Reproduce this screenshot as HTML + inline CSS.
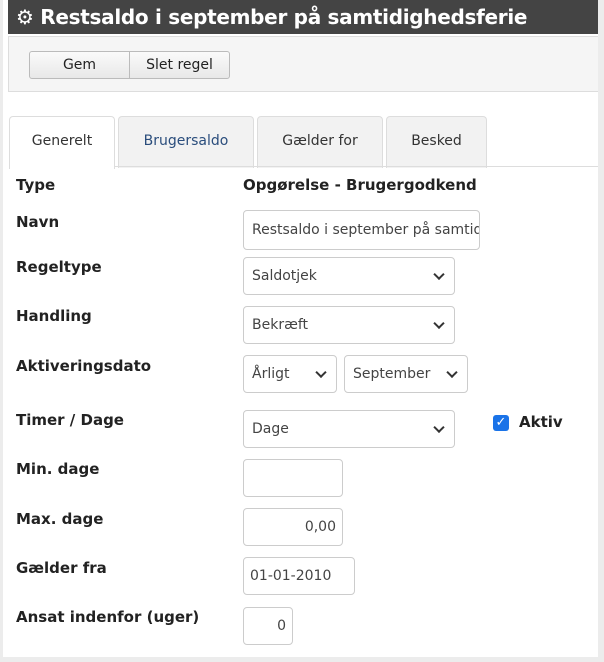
<!DOCTYPE html>
<html><head><meta charset="utf-8"><style>
*{box-sizing:border-box;margin:0;padding:0}
body{width:604px;height:662px;background:#ececec;font-family:"DejaVu Sans","Liberation Sans",sans-serif;position:relative;overflow:hidden}
.a{position:absolute}
.main{left:3px;top:0;width:595px;height:657px;background:#fff}
.title{left:8px;top:0;width:590px;height:34px;background:#444;color:#fff;font:bold 20px "DejaVu Sans",sans-serif;line-height:34px;padding-left:8px;letter-spacing:-0.3px}
.tb{left:8px;top:36px;width:590px;height:56px;background:#f5f5f5;border:1px solid #ddd;border-right:none}
.btn{top:51px;height:28px;border:1px solid #bbb;font-size:14px;line-height:26px;text-align:center;color:#222;background:linear-gradient(#fafafa,#e8e8e8)}
.tab{top:116px;height:52px;border:1px solid #ddd;border-bottom:none;border-radius:4px 4px 0 0;font-size:14px;text-align:center;line-height:48px;color:#333;background:#f2f2f2}
.lbl{left:16px;font-weight:bold;font-size:15px;color:#222}
.in{border:1px solid #ccc;border-radius:4px;background:#fff;font-size:14px;color:#444;padding-left:8px;display:flex;align-items:center}
.sel::after{content:"";position:absolute;right:11px;top:50%;width:6px;height:6px;border-right:2px solid #333;border-bottom:2px solid #333;transform:translateY(-70%) rotate(45deg)}
.r{justify-content:flex-end;padding-right:6px}
</style></head><body>
<div class="a main"></div>
<div class="a title">⚙ Restsaldo i september på samtidighedsferie</div>
<div class="a tb"></div>
<div class="a btn" style="left:29px;width:101px;border-radius:3px 0 0 3px">Gem</div>
<div class="a btn" style="left:129px;width:101px;border-radius:0 3px 3px 0">Slet regel</div>
<div class="a tab" style="left:9px;width:106px;background:#fff;height:53px;color:#333">Generelt</div>
<div class="a tab" style="left:118px;width:136px;color:#2a4d7c">Brugersaldo</div>
<div class="a tab" style="left:257px;width:126px">Gælder for</div>
<div class="a tab" style="left:386px;width:101px">Besked</div>
<div class="a" style="left:115px;top:166px;width:483px;height:1px;background:#ddd"></div>

<div class="a lbl" style="top:176px">Type</div>
<div class="a" style="left:243px;top:176px;font-weight:bold;font-size:15px;color:#222">Opgørelse - Brugergodkend</div>
<div class="a lbl" style="top:213px">Navn</div>
<div class="a in" style="left:243px;top:210px;width:237px;height:40px;overflow:hidden;white-space:nowrap">Restsaldo i september på samtidighedsferie</div>
<div class="a lbl" style="top:258px">Regeltype</div>
<div class="a in sel" style="left:243px;top:257px;width:212px;height:38px">Saldotjek</div>
<div class="a lbl" style="top:307px">Handling</div>
<div class="a in sel" style="left:243px;top:306px;width:212px;height:38px">Bekræft</div>
<div class="a lbl" style="top:357px">Aktiveringsdato</div>
<div class="a in sel" style="left:243px;top:355px;width:94px;height:38px">Årligt</div>
<div class="a in sel" style="left:344px;top:355px;width:124px;height:38px">September</div>
<div class="a lbl" style="top:411px">Timer / Dage</div>
<div class="a in sel" style="left:243px;top:410px;width:212px;height:38px">Dage</div>
<div class="a" style="left:493px;top:415px;width:16px;height:16px;background:#1a73e8;border-radius:3px;color:#fff;font-size:13px;line-height:16px;text-align:center;font-weight:bold">✓</div>
<div class="a" style="left:519px;top:413px;font-weight:bold;font-size:15px;color:#222">Aktiv</div>
<div class="a lbl" style="top:460px">Min. dage</div>
<div class="a in" style="left:243px;top:459px;width:100px;height:38px"></div>
<div class="a lbl" style="top:510px">Max. dage</div>
<div class="a in r" style="left:243px;top:508px;width:100px;height:38px">0,00</div>
<div class="a lbl" style="top:559px">Gælder fra</div>
<div class="a in" style="left:243px;top:557px;width:112px;height:38px;padding-left:6px">01-01-2010</div>
<div class="a lbl" style="top:608px">Ansat indenfor (uger)</div>
<div class="a in r" style="left:243px;top:607px;width:50px;height:38px">0</div>
</body></html>
